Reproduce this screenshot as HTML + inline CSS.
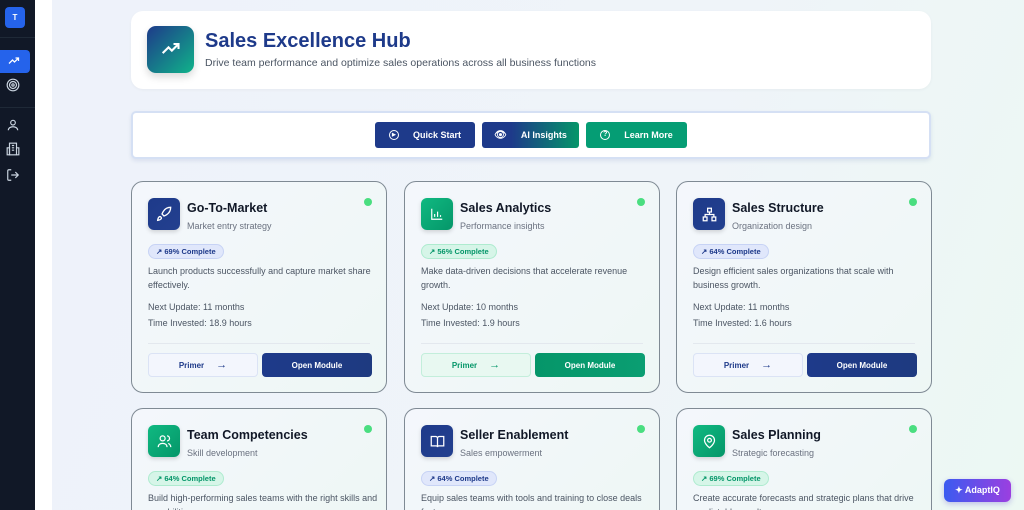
<!DOCTYPE html>
<html><head><meta charset="utf-8"><style>
*{box-sizing:border-box;margin:0;padding:0}
html,body{width:1024px;height:510px;overflow:hidden}
body{font-family:"Liberation Sans",sans-serif;background:#fff;position:relative}
#wrap{position:absolute;left:0;top:0;width:1024px;height:510px;overflow:hidden}
.side{position:absolute;left:0;top:0;width:35px;height:510px;background:#111827}
.main{position:absolute;left:52px;top:0;right:0;height:510px;background:linear-gradient(110deg,#eef2fa 0%,#eff4f9 60%,#ecf8f3 100%)}
.abs{position:absolute}
.hdr{left:131px;top:11px;width:800px;height:78px;background:#fff;border-radius:12px;box-shadow:0 1px 3px rgba(0,0,0,.04)}
.hicon{left:147px;top:26px;width:47px;height:47px;border-radius:9px;background:linear-gradient(135deg,#1e3a8a,#10b38a);box-shadow:0 4px 8px rgba(0,0,0,.15)}
.tb{left:131px;top:111px;width:800px;height:48px;background:#fff;border:2px solid #d5e0f4;border-radius:5px;box-shadow:0 2px 4px rgba(30,58,138,.1)}
.btn{position:absolute;top:122px;height:26px;border-radius:3px;color:#fff;font-size:9px;font-weight:bold;display:flex;align-items:center;justify-content:center;gap:14px}
.card{position:absolute;width:256px;height:212px;border:1px solid #7f8a94;border-radius:12px;background:linear-gradient(135deg,#f4f7fc,#eef7f5);overflow:hidden}
.card.low{height:102px;border-bottom:none;border-radius:12px 12px 0 0}
.ci{position:absolute;left:16px;top:16px;width:32px;height:32px;border-radius:6px;display:flex;align-items:center;justify-content:center;box-shadow:0 2px 4px rgba(0,0,0,.15)}
.ct{position:absolute;left:55px;top:19px;font-size:12.5px;font-weight:bold;color:#111827}
.cs{position:absolute;left:55px;top:39px;font-size:9px;color:#6b7280}
.dot{position:absolute;left:232px;top:16px;width:8px;height:8px;border-radius:50%;background:#4ade80}
.bd{position:absolute;left:16px;top:62px;height:15px;border-radius:8px;font-size:7.5px;font-weight:bold;padding:0 7px;display:flex;align-items:center;gap:3px}
.bb{background:#e0e7fb;border:1px solid #c7d3f5;color:#1e3a8a}
.bg{background:#d6f5e8;border:1px solid #aeebcf;color:#059669}
.cd{position:absolute;left:16px;top:83px;width:232px;font-size:9px;line-height:13.5px;color:#4b5563}
.m1{position:absolute;left:16px;top:120px;font-size:9px;color:#4b5563}
.m2{position:absolute;left:16px;top:136px;font-size:9px;color:#4b5563}
.hr{position:absolute;left:16px;right:16px;top:161px;border-top:1px solid #e3e8ee}
.pr{position:absolute;left:16px;top:171px;width:110px;height:24px;border-radius:4px;font-size:8px;font-weight:bold;display:flex;align-items:center;justify-content:center;gap:12px}
.pr span{font-size:11px}
.op{position:absolute;left:130px;top:171px;width:110px;height:24px;border-radius:4px;font-size:8px;font-weight:bold;color:#fff;display:flex;align-items:center;justify-content:center}
.pb{background:#f3f6fd;border:1px solid #dbe3f5;color:#1e3a8a}
.pg{background:#e8f8f1;border:1px solid #c3eedb;color:#059669}
.ob{background:linear-gradient(90deg,#1e3a8a,#1e3a80)}
.og{background:linear-gradient(90deg,#059669,#0a9e72)}
.ib{background:linear-gradient(135deg,#1e3a8a,#23408f)}
.ig{background:linear-gradient(135deg,#10b981,#059669)}
</style></head><body><div id="wrap">
<div class="side">
 <div class="abs" style="left:5px;top:7px;width:20px;height:21px;background:#2563eb;border-radius:4px;color:#fff;font-size:8px;font-weight:bold;display:flex;align-items:center;justify-content:center">T</div>
 <div class="abs" style="left:0;top:37px;width:35px;border-top:1px solid #1f2937"></div>
 <div class="abs" style="left:0;top:50px;width:30px;height:23px;background:#2563eb;border-radius:0 4px 4px 0"></div>
 <svg class="abs" style="left:7px;top:55px" width="14" height="12" viewBox="0 0 24 24" fill="none" stroke="#fff" stroke-width="2.5"><path d="M2 17l7-7 4 4 8-8M15 6h6v6"/></svg>
 <svg class="abs" style="left:6px;top:78px" width="14" height="14" viewBox="0 0 24 24" fill="none" stroke="#cbd5e1" stroke-width="2"><circle cx="12" cy="12" r="10"/><circle cx="12" cy="12" r="6"/><circle cx="12" cy="12" r="2"/></svg>
 <div class="abs" style="left:0;top:107px;width:35px;border-top:1px solid #1f2937"></div>
 <svg class="abs" style="left:6px;top:118px" width="14" height="14" viewBox="0 0 24 24" fill="none" stroke="#cbd5e1" stroke-width="2"><circle cx="12" cy="8" r="4"/><path d="M4 21c0-4 4-6 8-6s8 2 8 6"/></svg>
 <svg class="abs" style="left:6px;top:142px" width="14" height="14" viewBox="0 0 24 24" fill="none" stroke="#cbd5e1" stroke-width="2"><rect x="6" y="2" width="12" height="20"/><path d="M2 10h4v12H2zM18 10h4v12h-4M10 6h4M10 10h4M10 14h4"/></svg>
 <svg class="abs" style="left:6px;top:168px" width="14" height="14" viewBox="0 0 24 24" fill="none" stroke="#cbd5e1" stroke-width="2"><path d="M9 21H5a2 2 0 01-2-2V5a2 2 0 012-2h4M16 17l5-5-5-5M21 12H9"/></svg>
</div>
<div class="main"></div>
<div class="abs hdr"></div>
<div class="abs hicon"><svg style="position:absolute;left:11px;top:13px" width="26" height="20" viewBox="0 0 24 24" fill="none" stroke="#fff" stroke-width="2.5"><path d="M2 17l7-7 4 4 8-8M15 6h6v6"/></svg></div>
<div class="abs" style="left:205px;top:30px;font-size:20px;font-weight:bold;color:#1e3a8a">Sales Excellence Hub</div>
<div class="abs" style="left:205px;top:57px;font-size:10.5px;color:#4b5563">Drive team performance and optimize sales operations across all business functions</div>
<div class="abs tb"></div>
<div class="btn" style="left:375px;width:100px;background:#1e3a8a"><span style="display:inline-block;width:10px;height:10px;border:1.3px solid #fff;border-radius:50%;font-size:5px;line-height:8px;text-align:center">▶</span>Quick Start</div>
<div class="btn" style="left:482px;width:97px;background:linear-gradient(90deg,#1e3a8a 30%,#059669)"><span style="font-size:10px">👁</span>AI Insights</div>
<div class="btn" style="left:586px;width:101px;background:#059d74"><span style="display:inline-block;width:10px;height:10px;border:1.3px solid #fff;border-radius:50%;font-size:7px;line-height:8px;text-align:center">?</span>Learn More</div>

<div class="card" style="left:131px;top:181px"><div class="ci ib"><svg width="16" height="16" viewBox="0 0 24 24" fill="none" stroke="#fff" stroke-width="2"><path d="M4.5 16.5c-1.5 1.3-2 5-2 5s3.7-.5 5-2c.7-.8.7-2.1-.1-2.9a2.2 2.2 0 00-2.9-.1zM12 15l-3-3a22 22 0 012-4A13 13 0 0122 2c0 2.7-.8 7.5-6 11a22 22 0 01-4 2z"/></svg></div><div class="ct">Go-To-Market</div><div class="cs">Market entry strategy</div><div class="dot"></div><div class="bd bb">↗ 69% Complete</div><div class="cd">Launch products successfully and capture market share effectively.</div><div class="m1">Next Update: 11 months</div><div class="m2">Time Invested: 18.9 hours</div><div class="hr"></div><div class="pr pb">Primer <span>→</span></div><div class="op ob">Open Module</div></div>

<div class="card" style="left:404px;top:181px"><div class="ci ig"><svg width="14" height="14" viewBox="0 0 24 24" fill="none" stroke="#fff" stroke-width="2"><path d="M3 3v18h18M8 17v-5M13 17V8M18 17v-3"/></svg></div><div class="ct">Sales Analytics</div><div class="cs">Performance insights</div><div class="dot"></div><div class="bd bg">↗ 56% Complete</div><div class="cd">Make data-driven decisions that accelerate revenue growth.</div><div class="m1">Next Update: 10 months</div><div class="m2">Time Invested: 1.9 hours</div><div class="hr"></div><div class="pr pg">Primer <span>→</span></div><div class="op og">Open Module</div></div>

<div class="card" style="left:676px;top:181px"><div class="ci ib"><svg width="15" height="15" viewBox="0 0 24 24" fill="none" stroke="#fff" stroke-width="2"><rect x="9" y="2" width="6" height="6"/><rect x="2" y="16" width="6" height="6"/><rect x="16" y="16" width="6" height="6"/><path d="M5 16v-4h14v4M12 8v4"/></svg></div><div class="ct">Sales Structure</div><div class="cs">Organization design</div><div class="dot"></div><div class="bd bb">↗ 64% Complete</div><div class="cd">Design efficient sales organizations that scale with business growth.</div><div class="m1">Next Update: 11 months</div><div class="m2">Time Invested: 1.6 hours</div><div class="hr"></div><div class="pr pb">Primer <span>→</span></div><div class="op ob">Open Module</div></div>

<div class="card low" style="left:131px;top:408px"><div class="ci ig"><svg width="15" height="15" viewBox="0 0 24 24" fill="none" stroke="#fff" stroke-width="2"><circle cx="9" cy="7" r="4"/><path d="M2 21c0-4 3-6 7-6s7 2 7 6M16 3a4 4 0 010 8M22 21c0-3-2-5-4-6"/></svg></div><div class="ct">Team Competencies</div><div class="cs">Skill development</div><div class="dot"></div><div class="bd bg">↗ 64% Complete</div><div class="cd">Build high-performing sales teams with the right skills and capabilities.</div></div>

<div class="card low" style="left:404px;top:408px"><div class="ci ib"><svg width="15" height="15" viewBox="0 0 24 24" fill="none" stroke="#fff" stroke-width="2"><path d="M2 4h7a3 3 0 013 3v14a2 2 0 00-2-2H2zM22 4h-7a3 3 0 00-3 3v14a2 2 0 012-2h8z"/></svg></div><div class="ct">Seller Enablement</div><div class="cs">Sales empowerment</div><div class="dot"></div><div class="bd bb">↗ 64% Complete</div><div class="cd">Equip sales teams with tools and training to close deals faster.</div></div>

<div class="card low" style="left:676px;top:408px"><div class="ci ig"><svg width="15" height="15" viewBox="0 0 24 24" fill="none" stroke="#fff" stroke-width="2"><path d="M20 10c0 6-8 12-8 12s-8-6-8-12a8 8 0 0116 0z"/><circle cx="12" cy="10" r="3"/></svg></div><div class="ct">Sales Planning</div><div class="cs">Strategic forecasting</div><div class="dot"></div><div class="bd bg">↗ 69% Complete</div><div class="cd">Create accurate forecasts and strategic plans that drive predictable results.</div></div>

<div class="abs" style="left:944px;top:479px;width:67px;height:23px;border-radius:6px;background:linear-gradient(90deg,#3b5bf0,#9b3fe0);color:#fff;font-size:9px;font-weight:bold;display:flex;align-items:center;justify-content:center;gap:4px;box-shadow:0 2px 6px rgba(80,60,200,.3)">✦ AdaptIQ</div>
</div></body></html>
